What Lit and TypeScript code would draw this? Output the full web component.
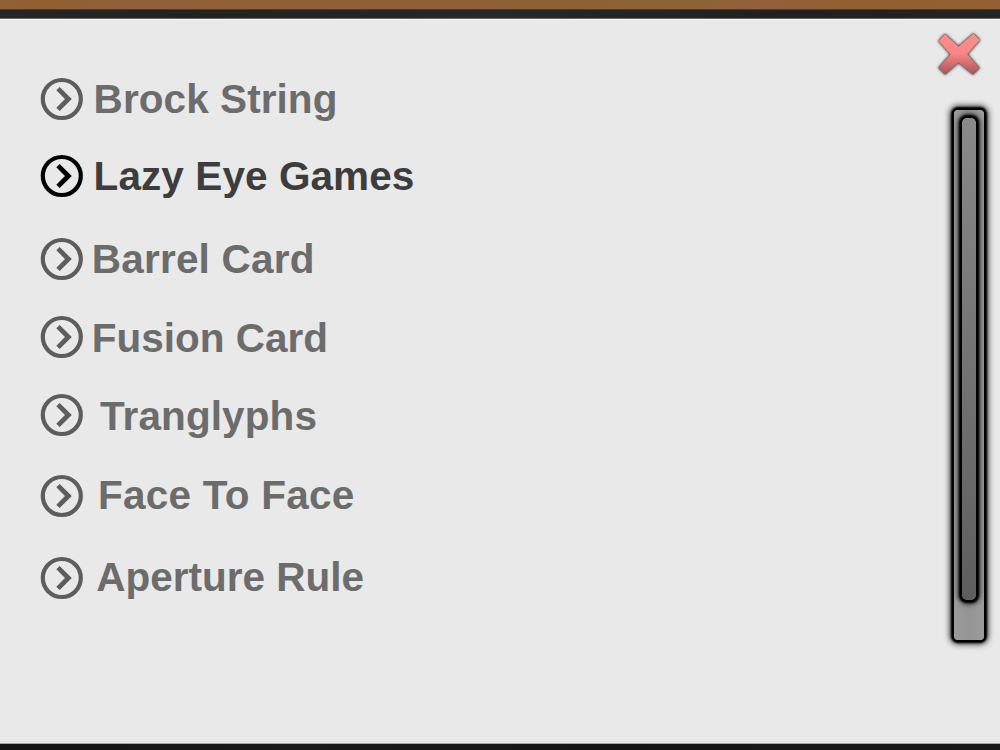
import { LitElement, html, css } from "lit";
import { customElement, property } from "lit/decorators.js";
import { classMap } from "lit/directives/class-map.js";
import { styleMap } from "lit/directives/style-map.js";

interface MenuEntry {
  label: string;
  // space above the row, and the offset of the label from its icon
  gap: number;
  indent: number;
  drop: number;
  spacing: number;
  active?: boolean;
}

const ENTRIES: MenuEntry[] = [
  { label: "Brock String", gap: 0, indent: 10.6, drop: 0, spacing: 0.07 },
  { label: "Lazy Eye Games", gap: 34.5, indent: 10.6, drop: 0, spacing: 0.08, active: true },
  { label: "Barrel Card", gap: 41.1, indent: 8.8, drop: 0, spacing: 0.2 },
  { label: "Fusion Card", gap: 36.1, indent: 8.8, drop: 1, spacing: 0 },
  { label: "Tranglyphs", gap: 36.3, indent: 17, drop: 1, spacing: 0.1 },
  { label: "Face To Face", gap: 39.4, indent: 15, drop: -1, spacing: 0.25 },
  { label: "Aperture Rule", gap: 39.6, indent: 13.3, drop: -1, spacing: 0 },
];

@customElement("menu-item")
export class MenuItem extends LitElement {
  static styles = css`
    :host {
      display: block;
    }

    .item {
      display: flex;
      align-items: flex-start;
      height: 42px;
      color: #6c6c6c;
      cursor: pointer;
    }

    .icon {
      width: 42px;
      height: 42px;
      flex: none;
      fill: none;
      stroke: #5d5d5d;
      stroke-width: 4.2;
      overflow: visible;
    }

    .chevron {
      stroke-width: 4.8;
    }

    .label {
      font: bold 40.5px/42px "Liberation Sans", Arial, sans-serif;
      white-space: nowrap;
    }

    .active {
      color: #3d3d3d;
    }

    .active .icon {
      stroke: #000;
    }
  `;

  @property()
  label = "";

  @property({ type: Number })
  indent = 0;

  @property({ type: Number })
  drop = 0;

  @property({ type: Number })
  spacing = 0;

  @property({ type: Boolean })
  active = false;

  render() {
    const offset = {
      marginLeft: `${this.indent}px`,
      marginTop: `${this.drop}px`,
      letterSpacing: `${this.spacing}px`,
    };
    return html`
      <div class=${classMap({ item: true, active: this.active })}>
        <svg class="icon" viewBox="0 0 42 42">
          <circle cx="20.8" cy="21" r="19"></circle>
          <path class="chevron" d="M17 10.6 L27.4 21 L17 31.4"></path>
        </svg>
        <span class="label" style=${styleMap(offset)}>${this.label}</span>
      </div>
    `;
  }
}

@customElement("scroll-bar")
export class ScrollBar extends LitElement {
  static styles = css`
    :host {
      display: block;
    }

    .track {
      box-sizing: border-box;
      width: 30px;
      height: 530px;
      padding: 8px 8px 0;
      border-radius: 4px;
      background: linear-gradient(90deg, #9c9c9c, #949494 50%, #9c9c9c);
      box-shadow: 0 0 0 2px #000, 0 0 2px 3px #000, 0 0 6px 4px rgb(0 0 0 / 80%);
    }

    .thumb {
      width: 14px;
      height: 482px;
      border-radius: 5px;
      background: linear-gradient(#898989, #5e5e5e);
      box-shadow: 0 0 0 2px #000, 0 0 2px 3px #000, 0 0 5px 4px rgb(0 0 0 / 75%);
    }
  `;

  render() {
    return html`<div class="track"><div class="thumb"></div></div>`;
  }
}

@customElement("app-root")
export class AppRoot extends LitElement {
  static styles = css`
    :host {
      display: flex;
      flex-direction: column;
      width: 1000px;
      height: 750px;
      overflow: hidden;
      background: #e9e9e9;
    }

    .wood {
      height: 9px;
      flex: none;
      background: linear-gradient(
        90deg,
        #916036,
        #8f5f30 5%,
        #91603a 12%,
        #8e5f34 45%,
        #8d6335 70%,
        #92603c 75%,
        #91602f 87%,
        #926034
      );
      border-bottom: 1px solid #54391f;
    }

    .rail {
      height: 8px;
      flex: none;
      background: linear-gradient(90deg, #262626, #222 20%, #282828 50%, #202020 80%, #252525);
      border-bottom: 1px solid #666;
    }

    .rail.bottom {
      height: 6px;
      background: linear-gradient(90deg, #141414, #1a1a1a 30%, #151515 60%, #191919);
      border-top: 1px solid #a5a5a5;
      border-bottom: none;
    }

    .panel {
      flex: 1;
      display: flex;
      justify-content: space-between;
      border-top: 1px solid #f5f5f5;
    }

    .menu {
      padding: 58px 0 0 41px;
    }

    .side {
      display: flex;
      flex-direction: column;
      align-items: flex-end;
      padding: 6px 16px 0 0;
    }

    .close {
      width: 56px;
      height: 56px;
      margin-bottom: 28px;
    }

    .cross {
      fill: url(#red);
      stroke: #806060;
      stroke-opacity: 0.5;
      stroke-width: 1;
      stroke-linejoin: round;
      filter: drop-shadow(0 0 1.8px rgb(0 0 0 / 85%));
    }
  `;

  render() {
    return html`
      <div class="wood"></div>
      <div class="rail"></div>
      <div class="panel">
        <nav class="menu">
          ${ENTRIES.map(
            (entry) => html`
              <menu-item
                style=${styleMap({ marginTop: `${entry.gap}px` })}
                .label=${entry.label}
                .indent=${entry.indent}
                .drop=${entry.drop}
                .spacing=${entry.spacing}
                .active=${entry.active ?? false}
              ></menu-item>
            `
          )}
        </nav>
        <div class="side">
          <svg class="close" viewBox="928 25.5 56 56">
            <defs>
              <linearGradient id="red" x1="0" y1="0" x2="0" y2="1">
                <stop offset="0" stop-color="#ff8f8f"></stop>
                <stop offset="0.5" stop-color="#f88585"></stop>
                <stop offset="1" stop-color="#a95454"></stop>
              </linearGradient>
            </defs>
            <path
              class="cross"
              d="M945 33.5 L958.5 45.8 L973.5 33 L980 39.5 L967.5 53.7 L979.5 67.5 L973 74 L958.5 62.3 L945 74 L938.5 67.3 L950.3 54 L938.5 40.5 Z"
            ></path>
          </svg>
          <scroll-bar></scroll-bar>
        </div>
      </div>
      <div class="rail bottom"></div>
    `;
  }
}
